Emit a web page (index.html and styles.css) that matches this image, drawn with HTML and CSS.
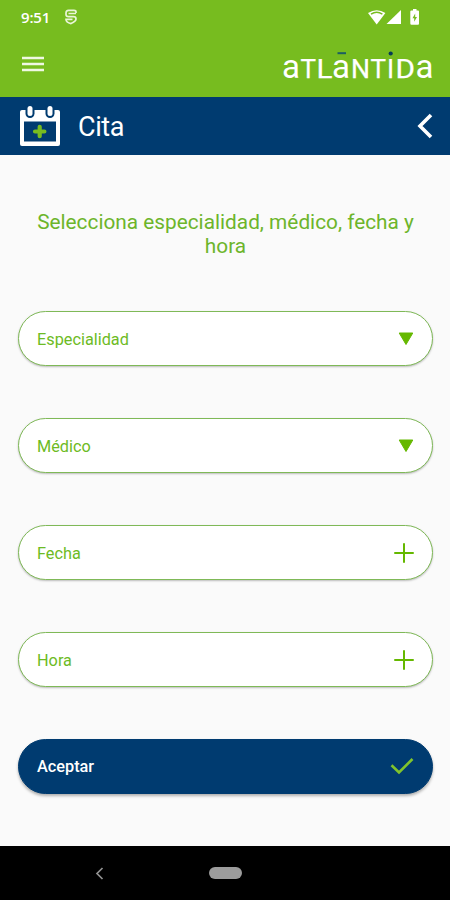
FILE: index.html
```html
<!DOCTYPE html>
<html lang="es">
<head>
<meta charset="utf-8">
<meta name="viewport" content="width=device-width, initial-scale=1">
<title>Cita</title>
<link rel="stylesheet" href="styles.css">
</head>
<body>
<div class="app">
  <header class="top">
    <div class="status">
      <span class="clock">9:51</span>
      <svg class="debug" width="12" height="16" viewBox="0 0 12 16" fill="none" stroke="currentColor" stroke-width="1.700"><path d="M11 4V3Q11 1.300 9 1.300H3.500Q1 1.300 1 4V5.500Q1 7.700 3.500 7.700H8.500Q11 7.700 11 10T6 14.600Q1 13.500 1 10.300H7.500M3.500 4.500H11"/></svg>
      <svg class="signals" width="52" height="17" viewBox="0 0 52 17" fill="currentColor"><path d="M0 4Q8.700-1.500 17.400 4L8.700 15.500Z"/><path d="M3 5.200Q8.700 1.400 14.400 5.200" fill="none" stroke="#77bc1f" stroke-width="1.400"/><path d="M33 1V15H18.500Z"/><path d="M43.500 1.500H45V0H48.500V1.500H50Q51 1.500 51 2.500V14.500Q51 15.700 50 15.700H43.500Q42.300 15.700 42.300 14.500V2.500Q42.300 1.500 43.500 1.500Z"/><path d="M47.200 4.500L44.500 9.200H46.200V12.800L49 8.100H47.200Z" fill="#77bc1f"/></svg>
    </div>
    <div class="brand-row">
      <svg class="menu" width="22" height="16" viewBox="0 0 22 16"><path d="M0 2H22M0 8H22M0 14H22" stroke="currentColor" stroke-width="2.300"/></svg>
      <svg class="logo" width="152" height="34" viewBox="0 0 152 34">
        <g class="logo-text">
          <text x="1" y="28" class="low" textLength="18" lengthAdjust="spacingAndGlyphs">a</text>
          <text x="19.500" y="28" textLength="15.500" lengthAdjust="spacingAndGlyphs">T</text>
          <text x="35.500" y="28" textLength="16" lengthAdjust="spacingAndGlyphs">L</text>
          <text x="51" y="28" class="low" textLength="18" lengthAdjust="spacingAndGlyphs">a</text>
          <text x="70" y="28" textLength="19" lengthAdjust="spacingAndGlyphs">N</text>
          <text x="89.500" y="28" textLength="15.500" lengthAdjust="spacingAndGlyphs">T</text>
          <text x="106" y="28">I</text>
          <text x="114.500" y="28" textLength="19.500" lengthAdjust="spacingAndGlyphs">D</text>
          <text x="134.500" y="28" class="low" textLength="18" lengthAdjust="spacingAndGlyphs">a</text>
        </g>
        <path d="M56.500 3.200H65" stroke="#1b5e62" stroke-width="2"/>
        <circle cx="109.700" cy="3.500" r="2.100" fill="#063b55"/>
      </svg>
    </div>
  </header>

  <div class="title-bar">
    <svg width="42" height="42" viewBox="0 0 42 42"><path d="M3 5H39Q41 5 41 7V39Q41 41 39 41H3Q1 41 1 39V7Q1 5 3 5Z" fill="#fff"/><path d="M5 16.500H37V36.500H5Z" fill="#003b70"/><rect x="6.500" y="-1" width="9" height="14" rx="4.500" fill="#003b70"/><rect x="26.500" y="-1" width="9" height="14" rx="4.500" fill="#003b70"/><rect x="8.500" y="1" width="5" height="10" rx="2.500" fill="#fff"/><rect x="28.500" y="1" width="5" height="10" rx="2.500" fill="#fff"/><path d="M20.700 21.800V31.200M16 26.500H25.400" stroke="#77bc1f" stroke-width="4.200" stroke-linecap="round"/></svg>
    <h1>Cita</h1>
    <svg class="back" width="16" height="26" viewBox="0 0 16 26" fill="none"><path d="M14 2L3 13L14 24" stroke="#fff" stroke-width="3.600"/></svg>
  </div>

  <main>
    <p class="intro">Selecciona especialidad, médico, fecha y hora</p>
    <div class="fields">
      <div class="field"><span>Especialidad</span><svg class="arrow" width="16" height="14" viewBox="0 0 16 14"><path d="M1.200 1H14.800L8 12.500Z" fill="currentColor" stroke="currentColor" stroke-linejoin="round"/></svg></div>
      <div class="field"><span>Médico</span><svg class="arrow" width="16" height="14" viewBox="0 0 16 14"><path d="M1.200 1H14.800L8 12.500Z" fill="currentColor" stroke="currentColor" stroke-linejoin="round"/></svg></div>
      <div class="field"><span>Fecha</span><svg class="plus" width="20" height="20" viewBox="0 0 20 20"><path d="M10 1V19M1 10H19" stroke="currentColor" stroke-width="2" stroke-linecap="round"/></svg></div>
      <div class="field"><span>Hora</span><svg class="plus" width="20" height="20" viewBox="0 0 20 20"><path d="M10 1V19M1 10H19" stroke="currentColor" stroke-width="2" stroke-linecap="round"/></svg></div>
      <div class="field accept"><span>Aceptar</span><svg class="check" width="24" height="18" viewBox="0 0 24 18" fill="none"><path d="M1.500 8.300L9 15.500L22.500 2" stroke="currentColor" stroke-width="2.600"/></svg></div>
    </div>
  </main>

  <nav class="system-nav">
    <svg width="9" height="13" viewBox="0 0 9 13" fill="none"><path d="M7.500 1L2 6.500L7.500 12" stroke="#929292" stroke-width="1.700"/></svg>
    <span class="home"></span>
  </nav>
</div>
</body>
</html>
```
FILE: styles.css
```css
* { box-sizing: border-box; }
body { margin: 0; font-family: Roboto, sans-serif; }
svg { display: block; flex: none; }
.app { width: 450px; height: 900px; display: flex; flex-direction: column; background: #fafafa; }
.top { height: 97px; background: #77bc1f; color: #fff; }
.status { height: 34px; padding: 0 30px 0 21px; display: flex; align-items: center; }
.clock { font-family: "Open Sans", sans-serif; font-size: 15px; font-weight: 600; line-height: 34px; letter-spacing: -0.2px; width: 44px; }
.debug { color: #e9f5d8; }
.signals { margin-left: auto; }
.brand-row { height: 63px; padding: 0 17px 0 22px; display: flex; align-items: flex-start; justify-content: space-between; }
.menu { margin-top: 22px; color: #eff8e3; }
.logo { margin-top: 16px; overflow: visible; }
.logo-text { font-size: 26px; font-weight: 400; fill: #fff; stroke: #fff; stroke-width: .25px; }
.low { font-size: 34px; font-weight: 400; stroke: none; }
.title-bar { height: 58px; padding: 0 17px 0 19px; display: flex; align-items: center; background: #003b70; color: #fff; }
.title-bar h1 { margin: 2px 0 0 17px; font-size: 27px; line-height: 32px; font-weight: 400; letter-spacing: -0.4px; }
.back { margin-left: auto; }
main { flex: 1; padding: 55px 17px 0 18px; }
.intro { margin: 0; text-align: center; font-size: 20.8px; line-height: 24px; color: #6db52b; }
.fields { margin-top: 53.4px; display: grid; gap: 51.9px; }
.field { height: 55px; padding: 0 18px; display: flex; align-items: center; justify-content: space-between; border: 1.5px solid #7fb957; border-radius: 28px; background: #fff; color: #6dbb24; font-size: 16.3px; box-shadow: 0 1px 2px rgba(0, 0, 0, .25); }
.field span { padding-top: 1px; }
.arrow { color: #65b800; }
.plus { color: #65b800; }
.accept { background: #003b70; border-color: #003b70; color: #fff; font-weight: 500; box-shadow: 0 2px 3px rgba(0, 0, 0, .3); }
.check { color: #80c42c; }
.system-nav { height: 54px; padding-left: 95px; display: flex; align-items: center; background: #000; }
.home { width: 33px; height: 12px; margin-left: 105px; border-radius: 6px; background: #9c9c9c; }
```
